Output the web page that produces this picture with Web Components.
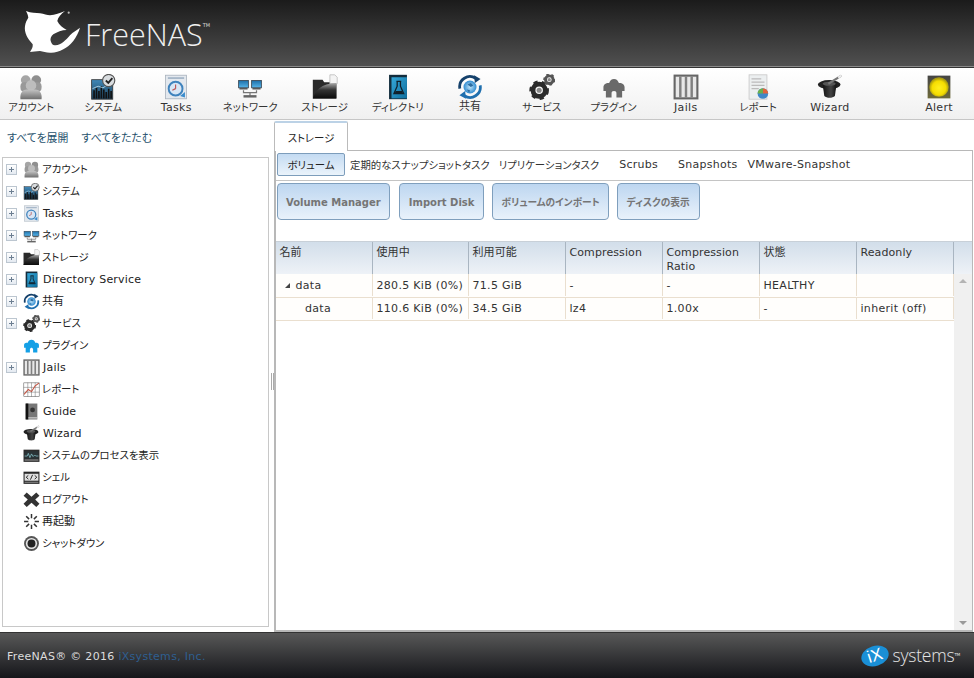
<!DOCTYPE html>
<html lang="ja"><head><meta charset="utf-8"><title>FreeNAS</title>
<style>
html,body{margin:0;padding:0;height:100%;background:#fff;overflow:hidden}
body{font:11px "DejaVu Sans","Noto Sans CJK JP",sans-serif;color:#333;font-feature-settings:"palt"}
</style></head><body>
<fn-app>
  <fn-header slot="header"></fn-header>
  <fn-toolbar slot="toolbar">
    <fn-tool w="72" icon="account">アカウント</fn-tool>
    <fn-tool w="72.5" icon="system">システム</fn-tool>
    <fn-tool w="73.5" icon="tasks">Tasks</fn-tool>
    <fn-tool w="74.5" icon="network">ネットワーク</fn-tool>
    <fn-tool w="74" icon="storage">ストレージ</fn-tool>
    <fn-tool w="72.5" icon="directory">ディレクトリ</fn-tool>
    <fn-tool w="72" icon="share">共有</fn-tool>
    <fn-tool w="71.5" icon="services">サービス</fn-tool>
    <fn-tool w="72" icon="plugins">プラグイン</fn-tool>
    <fn-tool w="72.5" icon="jails">Jails</fn-tool>
    <fn-tool w="72" icon="report">レポート</fn-tool>
    <fn-tool w="72" icon="wizard">Wizard</fn-tool>
    <fn-tool w="72" icon="alert" class="end">Alert</fn-tool>
  </fn-toolbar>
  <fn-side slot="side">
    <fn-row exp icon="account">アカウント</fn-row>
    <fn-row exp icon="system">システム</fn-row>
    <fn-row exp icon="tasks">Tasks</fn-row>
    <fn-row exp icon="network">ネットワーク</fn-row>
    <fn-row exp icon="storage">ストレージ</fn-row>
    <fn-row exp icon="directory">Directory Service</fn-row>
    <fn-row exp icon="share">共有</fn-row>
    <fn-row exp icon="services">サービス</fn-row>
    <fn-row icon="plugins-blue">プラグイン</fn-row>
    <fn-row exp icon="jails">Jails</fn-row>
    <fn-row icon="chart">レポート</fn-row>
    <fn-row icon="guide">Guide</fn-row>
    <fn-row icon="wizard">Wizard</fn-row>
    <fn-row icon="process">システムのプロセスを表示</fn-row>
    <fn-row icon="shell">シェル</fn-row>
    <fn-row icon="logout">ログアウト</fn-row>
    <fn-row icon="reboot">再起動</fn-row>
    <fn-row icon="shutdown">シャットダウン</fn-row>
  </fn-side>
  <fn-content slot="content">
    <fn-subtab slot="subtabs" active>ボリューム</fn-subtab>
    <fn-subtab slot="subtabs" style="margin-left:5px">定期的なスナップショットタスク</fn-subtab>
    <fn-subtab slot="subtabs" style="margin-left:9px">リプリケーションタスク</fn-subtab>
    <fn-subtab slot="subtabs" style="margin-left:20px">Scrubs</fn-subtab>
    <fn-subtab slot="subtabs" style="margin-left:20px">Snapshots</fn-subtab>
    <fn-subtab slot="subtabs" style="margin-left:10px">VMware-Snapshot</fn-subtab>
    <fn-button slot="buttons">Volume Manager</fn-button>
    <fn-button slot="buttons" style="margin-left:1px;padding:1px 9px 0">Import Disk</fn-button>
    <fn-button slot="buttons">ボリュームのインポート</fn-button>
    <fn-button slot="buttons" style="padding:1px 9px 0">ディスクの表示</fn-button>
    <fn-grid slot="grid"></fn-grid>
  </fn-content>
  <fn-footer slot="footer"></fn-footer>
</fn-app>
<script>
const gear=(cx,cy,r,c)=>`<circle cx="${cx}" cy="${cy}" r="${r*.72}" fill="none" stroke="${c}" stroke-width="${r*.56}"/><circle cx="${cx}" cy="${cy}" r="${r*1.0}" fill="none" stroke="${c}" stroke-width="${r*.3}" stroke-dasharray="${r*.5} ${r*.5}"/><circle cx="${cx}" cy="${cy}" r="${r*.3}" fill="#8a8a8a"/>`;
const ICONS={
account:`<defs><linearGradient id="a" x1="0" y1="0" x2="0" y2="1"><stop offset="0" stop-color="#c4c4c4"/><stop offset="1" stop-color="#6f6f6f"/></linearGradient></defs>
<circle cx="9.5" cy="7.5" r="6" fill="#a5a5a5"/><circle cx="22.5" cy="7.5" r="6" fill="#8f8f8f"/><rect x="3" y="10" width="26" height="12" rx="5" fill="#999"/><circle cx="16" cy="14" r="6.5" fill="#bdbdbd"/><path d="M3 31c-1-8 3-12 8-12h10c5 0 9 4 8 12z" fill="url(#a)"/>`,
system:`<defs><linearGradient id="a" x1="0" y1="0" x2="0" y2="1"><stop offset="0" stop-color="#3f88b8"/><stop offset="1" stop-color="#1d3f58"/></linearGradient></defs>
<rect x="2" y="7" width="26" height="24" fill="url(#a)" stroke="#333"/><path d="M5 30V20M8 30V17M11 30V21M14 30V15M17 30V19M20 30V22M23 30V18M26 30V21" stroke="#111" stroke-width="2"/><path d="M3 18l7-3 6 2 9-6" stroke="#bde" fill="none"/><circle cx="23" cy="8" r="7.5" fill="#d9dde0" stroke="#555" stroke-width="1.4"/><path d="M19.5 8l3 3 5-6" fill="none" stroke="#222" stroke-width="2.2"/>`,
tasks:`<rect x="3" y="1.5" width="26" height="29" fill="#e3e8ee" stroke="#a8b2bd"/><path d="M6 5h20" stroke="#9fb2c4" stroke-width="2"/><circle cx="15.500" cy="18" r="8.500" fill="#d7e6f5" stroke="#3f83bd" stroke-width="2.400"/><path d="M15.500 18v-5M15.500 18l-4 2" stroke="#b55" stroke-width="1.400"/><path d="M21 27l6-5v7z" fill="#3a8ccd"/>`,
network:`<defs><linearGradient id="a" x1="0" y1="0" x2="0" y2="1"><stop offset="0" stop-color="#1e6fa8"/><stop offset="1" stop-color="#58b6ea"/></linearGradient></defs>
<rect x="2" y="8" width="12" height="9" fill="url(#a)" stroke="#34424e"/><rect x="18" y="8" width="12" height="9" fill="url(#a)" stroke="#34424e"/><path d="M3 18h10M19 18h10" stroke="#5a5a5a" stroke-width="2.400"/><path d="M8 20v3h16v-3M16 22v5" stroke="#777" stroke-width="1.500" fill="none"/><rect x="8" y="26" width="16" height="3" fill="#666"/>`,
storage:`<defs><linearGradient id="a" x1="0" y1="0" x2="0" y2="1"><stop offset="0" stop-color="#aaa"/><stop offset=".45" stop-color="#333"/><stop offset="1" stop-color="#0c0c0c"/></linearGradient></defs>
<path d="M1 7h12l2 3h15v20H1z" fill="#2a2a2a"/><path d="M22 1h6l3 3v8h-9z" fill="#f4f4f4" stroke="#bbb"/><path d="M1 30c3-10 10-18 29-19v19z" fill="url(#a)"/>`,
directory:`<defs><linearGradient id="a" x1="0" y1="0" x2="1" y2="1"><stop offset="0" stop-color="#35a7d8"/><stop offset="1" stop-color="#0f6f9f"/></linearGradient></defs>
<rect x="5" y="1" width="22" height="30" fill="#122c3c"/><rect x="8" y="4" width="19" height="26" fill="url(#a)"/><path d="M14 9h6M15 9v6l-4 9h12l-4-9V9" fill="none" stroke="#10212c" stroke-width="1.600"/><path d="M13 21h8l1 3H12z" fill="#10212c"/>`,
share:`<defs><radialGradient id="a"><stop offset="0" stop-color="#bfe3f8"/><stop offset="1" stop-color="#2f8bd0"/></radialGradient></defs>
<circle cx="16" cy="16" r="8" fill="url(#a)"/><path d="M13 13l4-2 3 3-3 2zM12 19l4 1-1 3z" fill="#2d6c9f"/><path d="M3.500 18A12.500 12.500 0 0 1 23 5.500" fill="none" stroke="#15416b" stroke-width="3.400"/><path d="M21 1.500l8 4.500-7 5z" fill="#15416b"/><path d="M28.500 14A12.500 12.500 0 0 1 9 26.500" fill="none" stroke="#1f6fae" stroke-width="3.400"/><path d="M11 30.500l-8-4.500 7-5z" fill="#1f6fae"/>`,
services:gear(12.5,20,10.5,"#2b2b2b")+gear(25,7,6.5,"#555"),
plugins:`<path d="M3 16c0-3 3-5 6-5h1c1-3 3-5 6-5s5 2 6 5h1c3 0 6 2 6 5v5h-3v8h-7v-5c0-2-1-3-3-3s-3 1-3 3v5H6v-8H3z" fill="#6a6a6a"/>`,
"plugins-blue":`<path d="M2 15c0-3 3-4 6-4h1c1-4 3-6 7-6s6 2 7 6h1c3 0 6 1 6 4v5h-3v9h-8v-6c0-2-2-3-3-3s-3 1-3 3v6H5v-9H2z" fill="#14a0e6"/>`,
jails:`<rect x="2" y="2" width="28" height="28" fill="#e8e8e8" stroke="#666" stroke-width="2.600"/><path d="M9 3v26M16 3v26M23 3v26" stroke="#808080" stroke-width="3"/>`,
report:`<rect x="5" y="1" width="22" height="30" fill="#eceff0" stroke="#c8c8c8"/><path d="M8 6h12M8 10h16M8 14h16M8 18h9" stroke="#bbb" stroke-width="1.600"/><circle cx="22" cy="24" r="6.500" fill="#3f88c8"/><path d="M22 24V17.500A6.500 6.500 0 0 1 28.500 24z" fill="#e2643a"/><path d="M22 24h-6.500A6.500 6.500 0 0 1 22 17.500z" fill="#6cb04a"/>`,
chart:`<rect x="1.500" y="3.500" width="29" height="26" fill="#fff" stroke="#555"/><path d="M1 12h30M1 21h30M9 3v27M16 3v27M23 3v27" stroke="#777"/><path d="M2 25l8-9 6 4 7-11 7-5" fill="none" stroke="#c2513f" stroke-width="2"/>`,
wizard:`<defs><linearGradient id="a" x1="0" y1="0" x2="1" y2="0"><stop offset="0" stop-color="#111"/><stop offset=".6" stop-color="#444"/><stop offset="1" stop-color="#111"/></linearGradient></defs>
<ellipse cx="15" cy="13" rx="14" ry="5.500" fill="#222"/><path d="M7 13h17l-2 14c-3 3-10 3-13 0z" fill="url(#a)"/><ellipse cx="15" cy="12" rx="8" ry="2.500" fill="#555"/><path d="M14 12L30 2" stroke="#777" stroke-width="2.600"/><path d="M26 4.500L30 2" stroke="#eee" stroke-width="2.600"/>`,
alert:`<defs><radialGradient id="a" cx=".5" cy=".55"><stop offset="0" stop-color="#ffef20"/><stop offset=".7" stop-color="#f6dd00"/><stop offset="1" stop-color="#a89a10"/></radialGradient><linearGradient id="b" x1="0" y1="0" x2="0" y2="1"><stop offset="0" stop-color="#444"/><stop offset="1" stop-color="#6e6a3a"/></linearGradient></defs>
<rect x="2" y="2" width="28" height="28" fill="url(#b)"/><circle cx="16" cy="16" r="12" fill="url(#a)"/>`,
guide:`<rect x="5" y="1" width="22" height="30" fill="#777"/><rect x="5" y="1" width="5" height="30" fill="#111"/><rect x="10" y="27" width="17" height="2" fill="#ddd"/><circle cx="18" cy="13" r="4.500" fill="#333"/>`,
process:`<rect x="1" y="5" width="30" height="23" fill="#2c2c2c"/><rect x="3" y="8" width="26" height="14" fill="#2a3336"/><path d="M3 17h5l2-5 3 8 3-7 3 5 3-3 2 2h5" fill="none" stroke="#8fd0d8" stroke-width="1.300"/><path d="M3 24.500h26" stroke="#999" stroke-width="2"/>`,
shell:`<rect x="1" y="5" width="30" height="23" fill="#2a2a2a"/><rect x="3" y="9" width="26" height="13" fill="#e0e0e0"/><path d="M10 12l-4 3.500 4 3.500M22 12l4 3.500-4 3.500M18 11l-4 9" fill="none" stroke="#222" stroke-width="1.800"/><path d="M3 25h26" stroke="#888" stroke-width="2"/>`,
logout:`<path d="M7 3l9 8 9-8 6 6-8 7 8 8-6 6-9-8-9 8-6-6 8-8-8-7z" fill="#333"/>`,
reboot:`<g stroke="#333" stroke-width="2.800"><path d="M16 2v8M16 22v8M2 16h8M22 16h8M6 6l5.500 5.500M20.500 20.500L26 26M6 26l5.500-5.500M20.500 11.500L26 6" /></g>`,
shutdown:`<circle cx="16" cy="16" r="14" fill="#555"/><circle cx="16" cy="16" r="10.500" fill="#e8e8e8"/><circle cx="16" cy="16" r="7.500" fill="#222"/>`
};
const KANA=/[\u3040-\u30ff]/, KANJI=/[\u4e00-\u9fff]/;
/* Kana in the reference are set narrower than kanji; Latin is slightly looser. */
const fit=(el,latin,kana=10.4)=>{
  const t=el.textContent;
  if(KANA.test(t)){el.style.fontSize=kana+"px";el.style.letterSpacing="0";}
  else if(KANJI.test(t)){el.style.letterSpacing="0";}
  else el.style.letterSpacing=latin+"px";
};
const isCJK=t=>KANA.test(t)||KANJI.test(t);
const def=(name,css,html)=>{
  customElements.define(name,class extends HTMLElement{
    constructor(){super();this.attachShadow({mode:"open"}).innerHTML=`<style>${css}</style>${html}`;}
  });
};
customElements.define("fn-icon",class extends HTMLElement{
  connectedCallback(){
    if(this.shadowRoot)return;
    const s=this.getAttribute("size")||26;
    this.attachShadow({mode:"open"}).innerHTML=`<style>:host{display:block;width:${s}px;height:${s}px}svg{display:block;width:100%;height:100%}</style><svg viewBox="0 0 32 32" xmlns="http://www.w3.org/2000/svg">${ICONS[this.getAttribute("name")]||""}</svg>`;
  }
});
def("fn-app",`:host{display:grid;grid-template-columns:270px 4px 1fr;grid-template-rows:auto auto 1fr auto;width:100%;height:100vh}
 ::slotted([slot=header]),::slotted([slot=toolbar]),::slotted([slot=footer]){grid-column:1/-1}
 .split{display:flex;align-items:center;justify-content:center;gap:1px;padding-top:10px}
 .split i{display:block;width:1px;height:17px;background:#aaa}`,
 `<slot name="header"></slot><slot name="toolbar"></slot><slot name="side"></slot><div class="split"><i></i><i></i></div><slot name="content"></slot><slot name="footer"></slot>`);
def("fn-header",`:host{display:flex;align-items:flex-start;height:66px;background:linear-gradient(#1b1b1b,#505050);border-bottom:1px solid #8a8a8a}
 svg{display:block;margin:10px 0 0 24px;flex:none}
 .t{font:300 30.5px/1 "Open Sans","Lato",sans-serif;color:#f0f0f0;margin:19px 0 0 3px}
 sup{font:5px "DejaVu Sans",sans-serif;vertical-align:top;position:relative;top:3px;color:#ddd}`,
 `<svg width="58" height="47" viewBox="24 10 58 47" xmlns="http://www.w3.org/2000/svg"><path fill="#fff" d="M26 11C31 13 36 13 40 13.300C44 14 47 15 50 15.300C55 15 60 13 65 11C61 14 58 17 57.300 21C59 25 63 28 66.700 30C62 30 57 32 53.300 34.300C51 36 50 39 50.700 41C51.500 44 53 45.500 55 45.300C58 45.500 61 44 63.300 42C66 40 68 37.500 70 35.300C73 32 77 30 80 27.700C79 32 76 37 73.300 41C70 45 67 47.500 63.300 49.300C59 52 54 53 50 52.700C46 52.500 43 51.500 40 51C36 51 33 52 30 52C32 49 33 47 32.700 44.300C30 41 28 39 26.700 36C25 32 24.500 29 25 26C25.500 22 27 20 28.300 17.700C28 15 27 13 26 11Z"/><circle cx="68.700" cy="12.700" r="1.100" fill="#bbb"/></svg><div class="t">FreeNAS<sup>TM</sup></div>`);
def("fn-toolbar",`:host{display:flex;height:51px;border-top:1px solid #333;background:linear-gradient(#fff,#f0f0f0);border-bottom:1px solid #c6c6c6}
 .w{display:flex;flex:1;margin-left:-5px}
 ::slotted(.end){margin-left:auto;margin-right:-1px}`,`<div class="w"><slot></slot></div>`);
customElements.define("fn-tool",class extends HTMLElement{
  connectedCallback(){ if(this.shadowRoot)return;
    this.style.width=this.getAttribute("w")+"px";
    fit(this,.3);
    const ja=isCJK(this.textContent);
    this.attachShadow({mode:"open"}).innerHTML=`<style>:host{display:flex;flex-direction:column;align-items:center;flex:none;color:#333}
    fn-icon{margin-top:6px} .l{margin-top:${ja?0:1}px;line-height:14px;white-space:nowrap}</style><fn-icon name="${this.getAttribute("icon")}" size="26"></fn-icon><div class="l"><slot></slot></div>`;}
});
def("fn-side",`:host{display:flex;flex-direction:column;min-height:0;background:#fff}
 .links{display:flex;gap:13px;height:33px;margin-bottom:4px;align-items:center;padding:0 0 0 7px;color:#28536e;box-sizing:border-box;font-size:10.9px}
 .tree{flex:1;margin:0 1px 5px 2px;border:1px solid #c8c8c8;display:flex;flex-direction:column;overflow:hidden}`,
 `<div class="links"><span>すべてを展開</span><span>すべてをたたむ</span></div><div class="tree"><slot></slot></div>`);
customElements.define("fn-row",class extends HTMLElement{
  connectedCallback(){ if(this.shadowRoot)return;
    const e=this.hasAttribute("exp");
    fit(this,.2);
    const ja=isCJK(this.textContent);
    this.attachShadow({mode:"open"}).innerHTML=`<style>:host{display:flex;align-items:center;height:22px;flex:none;padding-left:3px;color:#222;white-space:nowrap}
    .x{width:9px;height:9px;flex:none;border:1px solid #bcc6d0;background:linear-gradient(#fff,#e4eaf1)}
    .n{width:11px;flex:none}
    .x svg{display:block;width:9px;height:9px}
    .t{margin:0 0 ${ja?2:0}px ${ja?-1:0}px}
    fn-icon{margin:0 3px 0 6px;flex:none}</style>${e?'<div class="x"><svg viewBox="0 0 9 9"><path d="M2 4.500h5M4.500 2v5" stroke="#6d7f92"/></svg></div>':'<div class="n"></div>'}<fn-icon name="${this.getAttribute("icon")}" size="17"></fn-icon><span class="t"><slot></slot></span>`;}
});
def("fn-content",`:host{display:flex;flex-direction:column;min-width:0;min-height:0;background:#fff}
 .tabstrip{height:30px;display:flex;align-items:flex-end}
 .tab{width:72px;height:28px;border:1px solid #bbb;border-top:2px solid #bcd2e6;border-bottom:none;border-radius:2px 2px 0 0;background:#fff;display:flex;align-items:center;justify-content:center;margin-bottom:-1px;position:relative;color:#222;font-size:10.4px}
 .pane{flex:1;display:flex;flex-direction:column;min-height:0;border:1px solid #b8b8b8;border-width:1px 1px 2px 2px;margin-right:1px}
 .sub{display:flex;align-items:center;height:30px;box-sizing:border-box;border-bottom:1px solid #c4c4c4;padding:0 0 2px 1px}
 .btns{display:flex;gap:8px;padding:2px 0 0 1px;height:60px;box-sizing:border-box;align-items:flex-start}
 ::slotted(fn-grid){flex:1;min-height:0}`,
 `<div class="tabstrip"><div class="tab">ストレージ</div></div><div class="pane"><div class="sub"><slot name="subtabs"></slot></div><div class="btns"><slot name="buttons"></slot></div><slot name="grid"></slot></div>`);
customElements.define("fn-subtab",class extends HTMLElement{
  connectedCallback(){ if(this.shadowRoot)return;
    fit(this,.25);
    this.attachShadow({mode:"open"}).innerHTML=`<style>:host{display:block;white-space:nowrap;color:#333;flex:none}
    :host([active]){box-sizing:border-box;width:68px;height:23px;display:flex;align-items:center;justify-content:center;background:linear-gradient(#c4dbf2,#eaf3fb);border:1px solid #7d9dbb;border-radius:2px;color:#222}</style><slot></slot>`;}
});
customElements.define("fn-button",class extends HTMLElement{
  connectedCallback(){ if(this.shadowRoot)return;
    this.style.fontSize=KANA.test(this.textContent)?"9.7px":"10px";
    this.attachShadow({mode:"open"}).innerHTML=`<style>:host{display:flex;align-items:center;box-sizing:border-box;height:37px;padding:1px 8px 0;border:1px solid #7f9fbd;border-radius:4px;background:linear-gradient(#bdd6f0,#e9f2fb);font-weight:bold;color:#757575;white-space:nowrap;flex:none}</style><slot></slot>`;}
});
def("fn-grid",`:host{display:grid;grid-template-columns:1fr 18px;grid-template-rows:auto 1fr;min-height:0;background:#fff}
 .head{grid-column:1/-1;display:grid;grid-template-columns:97px 96px repeat(5,97px) 1fr;height:33px;box-sizing:border-box;background:linear-gradient(#d2deea,#eef2f7);border-top:1px solid #c8d0d8}
 .head div{padding:4px 0 0 3.500px;line-height:14px;border-right:1px solid #a9b5c1;box-sizing:border-box;letter-spacing:.1px}
 .head div:last-child{border:none}
 .body{grid-column:1;min-width:0;letter-spacing:.3px}
 .r{display:grid;grid-template-columns:97px 96px repeat(4,97px) 97px;height:23px;box-sizing:border-box;border-bottom:1px solid #eadfcf;background:#fffefc;align-items:center;padding-bottom:1px}
 .r.first{height:24px}
 .r div{padding-left:3.500px;height:100%;display:flex;align-items:center;border-right:1px solid #eadfcf;box-sizing:border-box;white-space:nowrap}
 .tri{display:inline-block;width:0;height:0;border-style:solid;border-width:0 0 5px 5px;border-color:transparent transparent #444;margin:1px 6px 0 5px}
 .sb{background:#f0f0f0;display:flex;flex-direction:column;justify-content:space-between;align-items:center;padding:5px 0}
 .sb i{display:block;width:0;height:0;border-left:4px solid transparent;border-right:4px solid transparent}
 .up{border-bottom:4px solid #b4b4b4}.dn{border-top:4px solid #9a9a9a}`,
 `<div class="head"><div>名前</div><div>使用中</div><div>利用可能</div><div>Compression</div><div>Compression Ratio</div><div>状態</div><div>Readonly</div><div></div></div>
 <div class="body"><div class="r first"><div><span class="tri"></span>data</div><div>280.5 KiB (0%)</div><div>71.5 GiB</div><div>-</div><div>-</div><div>HEALTHY</div><div></div></div>
 <div class="r"><div style="padding-left:29px">data</div><div>110.6 KiB (0%)</div><div>34.5 GiB</div><div>lz4</div><div>1.00x</div><div>-</div><div>inherit (off)</div></div></div>
 <div class="sb"><i class="up"></i><i class="dn"></i></div>`);
def("fn-footer",`:host{display:flex;align-items:center;justify-content:space-between;height:45px;border-top:1px solid #333;background:linear-gradient(#585858,#15161a);padding:0 14px 0 7px;color:#ddd}
 .c{letter-spacing:.3px;margin-top:2px}
 a{color:#2f5f90;text-decoration:none}
 .ix{display:flex;align-items:center;gap:3px}
 .o{width:28px;height:20px;border-radius:50%;background:#1a8fd6;color:#fff;font:17px/20px "Liberation Sans",sans-serif;text-align:center;transform:rotate(-18deg)}
 .s{font:300 17.5px/1 "Open Sans",sans-serif;color:#e6e6e6;letter-spacing:-.2px}
 sup{font:4px "DejaVu Sans",sans-serif;vertical-align:top;position:relative;top:5px}`,
 `<div class="c">FreeNAS® © 2016 <a href="#">iXsystems, Inc.</a></div><div class="ix"><div class="o">iX</div><div class="s">systems<sup>TM</sup></div></div>`);
</script>
</body></html>
